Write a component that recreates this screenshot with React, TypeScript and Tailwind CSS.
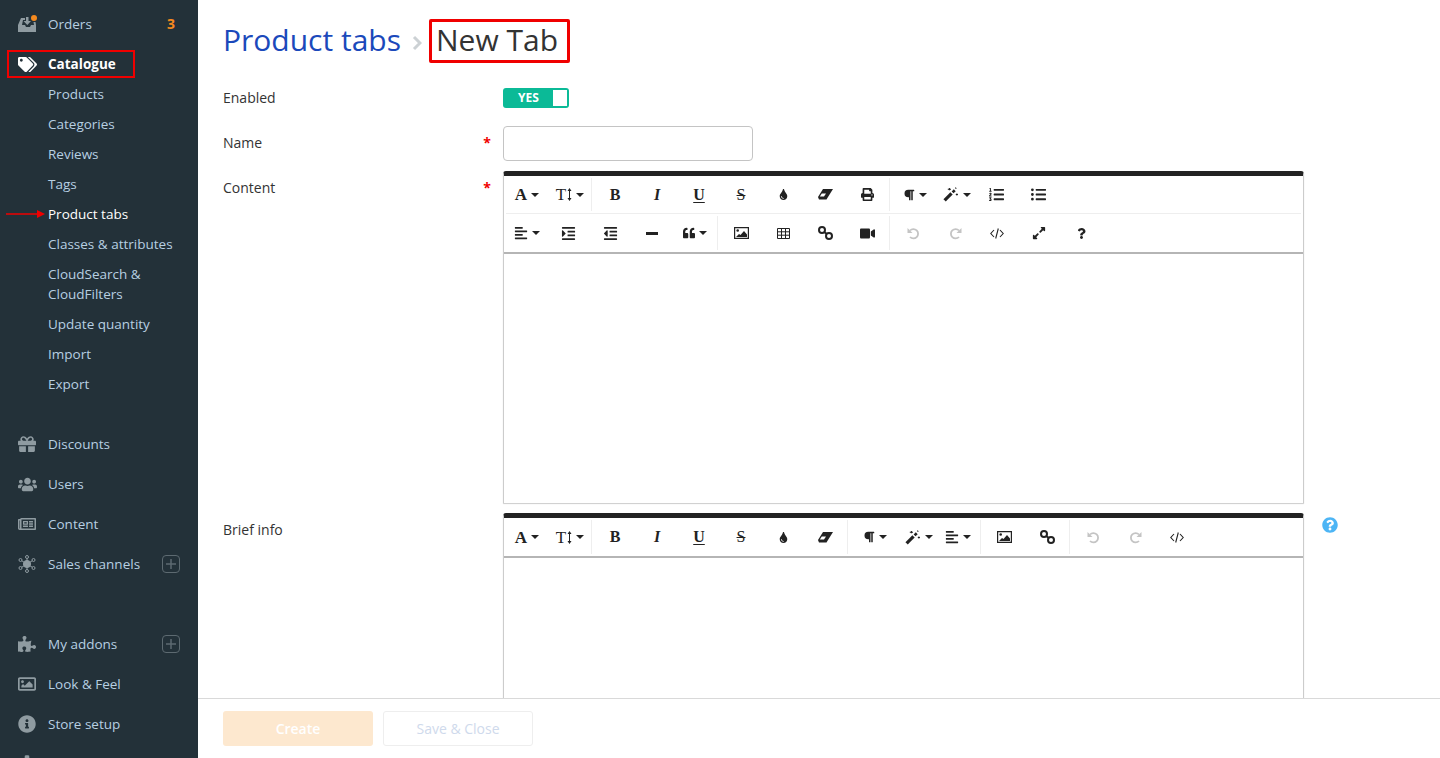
import type { ReactNode } from "react";
import {
  FaTags,
  FaGift,
  FaUsers,
  FaRegNewspaper,
  FaPuzzlePiece,
  FaRegImage,
  FaInfoCircle,
  FaCog,
  FaTint,
  FaPrint,
  FaParagraph,
  FaListOl,
  FaListUl,
  FaAlignLeft,
  FaIndent,
  FaOutdent,
  FaQuoteLeft,
  FaVideo,
  FaExpandAlt,
  FaQuestion,
  FaQuestionCircle,
} from "react-icons/fa";

function Caret() {
  return (
    <svg width="8" height="4" viewBox="0 0 8 4" className="ml-[4px] shrink-0">
      <path d="M0 0h8L4 4z" fill="#222" />
    </svg>
  );
}

function Eraser() {
  return (
    <svg width="15" height="11" viewBox="0 0 15 11">
      <path d="M5 0h10L10 8H0z" fill="#222" />
      <path d="M1.800 7.500L3.800 4.500H8L6 7.500z" fill="#fff" />
      <path d="M0 8h10l-1.500 2.500H1z" fill="#222" />
    </svg>
  );
}

function Wand() {
  return (
    <svg width="16" height="15" viewBox="0 0 15 14" fill="none" stroke="#222">
      <path d="M1.500 12.500L8 6" strokeWidth="3" />
      <path d="M9 5l2-2" strokeWidth="2.500" />
      <path d="M6 1v2M4.500 2h3M13 6v2M12 7h2M11.500 .500l1 1" strokeWidth="1" />
    </svg>
  );
}

function LinkIcon() {
  return (
    <svg width="15" height="14" viewBox="0 0 15 14" fill="none" stroke="#222" strokeWidth="2">
      <circle cx="4" cy="4" r="3" />
      <circle cx="11" cy="10" r="3" />
      <path d="M6 6l3 2" />
    </svg>
  );
}

function CodeIcon() {
  return (
    <svg width="14" height="11" viewBox="0 0 14 11" fill="none" stroke="#222" strokeWidth="1.100">
      <path d="M4 2L.800 5.500 4 9M10 2l3.200 3.500L10 9M8.300 .500L5.700 10.500" />
    </svg>
  );
}

function TableIcon() {
  return (
    <svg width="13" height="11" viewBox="0 0 13 11" fill="none" stroke="#222" strokeWidth="1">
      <path d="M.500 .500h12v10H.500zM.500 3.800h12M.500 7.200h12M4.500 .500v10M8.500 .500v10" />
    </svg>
  );
}

function PictureIcon() {
  return (
    <svg width="15" height="12" viewBox="0 0 15 12">
      <path d="M.600 .600h13.800v10.800H.600z" fill="none" stroke="#222" strokeWidth="1.200" />
      <circle cx="3.700" cy="3.500" r="1.300" fill="#222" />
      <path d="M2 10l3-3 1.500 1L10 4l3 3.500V10z" fill="#222" />
    </svg>
  );
}

function Undo({ flip }: { flip?: boolean }) {
  return (
    <svg width="13" height="13" viewBox="0 0 13 13" fill="none" className={flip ? "-scale-x-100" : ""}>
      <path d="M3 3.500A4.700 4.700 0 1 1 3 10" stroke="#c4c4c4" strokeWidth="1.800" />
      <path d="M.500 1v5h5z" fill="#c4c4c4" />
    </svg>
  );
}

function Serif({ children, className }: { children: ReactNode; className?: string }) {
  return (
    <span className={`font-['Liberation_Serif',serif] text-[16px] leading-none text-[#222] ${className ?? ""}`}>
      {children}
    </span>
  );
}

function Btn({ w = "w-[42px]", children }: { w?: string; children: ReactNode }) {
  return <div className={`${w} flex h-full shrink-0 items-center justify-center text-[13px] text-[#222]`}>{children}</div>;
}

function Sep() {
  return <div className="ml-[1px] mr-[2px] h-full w-px shrink-0 bg-[#eeeeee]" />;
}

function FontBtns() {
  return (
    <>
      <Btn>
        <Serif className="font-bold text-[17px]">A</Serif>
        <Caret />
      </Btn>
      <Btn>
        <Serif className="ml-[2px] text-[17px]">T</Serif>
        <svg width="5" height="13" viewBox="0 0 5 13" className="ml-[1px]">
          <path d="M2.500 0L4.500 3H3v7h1.500l-2 3-2-3H2V3H.500z" fill="#222" />
        </svg>
        <Caret />
      </Btn>
    </>
  );
}

function StyleBtns() {
  return (
    <>
      <Btn><Serif className="font-bold">B</Serif></Btn>
      <Btn><Serif className="italic font-bold">I</Serif></Btn>
      <Btn><Serif className="font-bold underline underline-offset-2">U</Serif></Btn>
      <Btn><Serif className="line-through">S</Serif></Btn>
      <Btn><FaTint size={11} /></Btn>
      <Btn><Eraser /></Btn>
    </>
  );
}

function Editor({ children, bodyClass }: { children: ReactNode; bodyClass: string }) {
  return (
    <div className="w-[801px] shrink-0 rounded-t-[3px] border-x border-[#cccccc] border-t-[5px] border-t-[#222222] shadow-[0_1px_1px_rgba(0,0,0,0.2)]">
      {children}
      <div className={`border-t-2 border-t-[#b5b5b5] bg-white ${bodyClass}`} />
    </div>
  );
}

function PlusBox() {
  return (
    <div className="ml-auto flex h-[18px] w-[18px] items-center justify-center rounded-[4px] border border-[#5d6a71]">
      <svg width="10" height="10" viewBox="0 0 10 10">
        <path d="M5 0v10M0 5h10" stroke="#5d6a71" strokeWidth="1.500" />
      </svg>
    </div>
  );
}

function NavItem({ icon, label, plus, badge }: { icon: ReactNode; label: string; plus?: boolean; badge?: string }) {
  return (
    <div className="flex h-10 shrink-0 items-center pl-[18px] pr-[18px]">
      <div className="flex w-[30px] justify-start text-[18px] text-[#8f9ba1]">{icon}</div>
      <span className="text-[#b7cfe2]">{label}</span>
      {plus && <PlusBox />}
      {badge && <span className="ml-auto mr-[5px] text-[14px] font-bold text-[#f58a1f]">{badge}</span>}
    </div>
  );
}

function SubItem({ label, active }: { label: string; active?: boolean }) {
  return (
    <div className={`flex h-[30px] shrink-0 items-center pl-[48px] ${active ? "text-white" : "text-[#b7cfe2]"}`}>{label}</div>
  );
}

function Sidebar() {
  return (
    <aside className="relative flex h-full w-[198px] shrink-0 flex-col overflow-hidden bg-[#233139] pt-[4px] text-[13.5px] leading-5">
      <NavItem
        label="Orders"
        badge="3"
        icon={
          <svg width="20" height="20" viewBox="0 0 20 20">
            <path d="M3 4h4v2H5L4 11h3l1 2h4l1-2h3l-.5-3h2l.5 3v7H0v-7z" fill="#8f9ba1" />
            <path d="M8 3h2.500v4H13l-3.700 4L5.500 7H8z" fill="#8f9ba1" />
            <circle cx="16" cy="4" r="3" fill="#f58a1f" />
          </svg>
        }
      />
      <div className="mt-[5px] flex h-[30px] shrink-0 items-center pl-[18px]">
        <div className="w-[30px]"><FaTags size={19} className="text-white" /></div>
        <span className="font-bold text-white">Catalogue</span>
      </div>
      <SubItem label="Products" />
      <SubItem label="Categories" />
      <SubItem label="Reviews" />
      <SubItem label="Tags" />
      <SubItem label="Product tabs" active />
      <SubItem label="Classes & attributes" />
      <div className="flex h-[50px] shrink-0 items-center pl-[48px] text-[#b7cfe2]">
        CloudSearch &<br />CloudFilters
      </div>
      <SubItem label="Update quantity" />
      <SubItem label="Import" />
      <SubItem label="Export" />
      <div className="h-[25px] shrink-0" />
      <NavItem label="Discounts" icon={<FaGift />} />
      <NavItem label="Users" icon={<FaUsers size={19} />} />
      <NavItem label="Content" icon={<FaRegNewspaper />} />
      <NavItem
        label="Sales channels"
        plus
        icon={
          <svg width="18" height="18" viewBox="0 0 18 18" fill="none" stroke="#8f9ba1" strokeWidth="1">
            <path d="M9 2v14M2.500 5l13 8M15.500 5l-13 8" />
            <circle cx="9" cy="9" r="3.600" fill="#8f9ba1" />
            <circle cx="9" cy="2" r="1.500" fill="#233139" />
            <circle cx="9" cy="16" r="1.500" fill="#233139" />
            <circle cx="2.500" cy="5" r="1.500" fill="#233139" />
            <circle cx="15.500" cy="5" r="1.500" fill="#233139" />
            <circle cx="2.500" cy="13" r="1.500" fill="#233139" />
            <circle cx="15.500" cy="13" r="1.500" fill="#233139" />
          </svg>
        }
      />
      <div className="h-10 shrink-0" />
      <NavItem label="My addons" plus icon={<FaPuzzlePiece />} />
      <NavItem label="Look & Feel" icon={<FaRegImage />} />
      <NavItem label="Store setup" icon={<FaInfoCircle />} />
      <NavItem label="" icon={<FaCog />} />

      {/* red marks drawn over the screenshot */}
      <div className="absolute left-[7px] top-[50px] h-[28px] w-[128px] border-2 border-[#f00000]" />
      <svg width="40" height="10" viewBox="0 0 40 10" className="absolute left-[6px] top-[209px]">
        <path d="M0 5h32" stroke="#f00000" strokeWidth="1.500" />
        <path d="M31 1l8 4-8 4z" fill="#f00000" />
      </svg>
    </aside>
  );
}

export default function App() {
  return (
    <div className="flex h-[758px] w-full overflow-hidden bg-white font-['Open_Sans',sans-serif] text-[14px] text-[#333333]">
      <Sidebar />
      <main className="flex h-full min-w-0 flex-1 flex-col">
        <div className="min-h-0 flex-1 overflow-hidden pl-[25px]">
          <div className="mt-[19px] flex h-[44px] items-center text-[30px] leading-none">
            <span className="pb-[2px] text-[#1b49bb]">Product tabs</span>
            <svg width="10" height="18" viewBox="0 0 10 18" className="ml-[11px] mr-[7px] mt-[4px]" fill="none" stroke="#ccd1d4" strokeWidth="3">
              <path d="M2 3l6 6-6 6" />
            </svg>
            <span className="flex h-[44px] items-center rounded-[2px] border-[3px] border-[#f00000] pb-[2px] pl-[4px] pr-[9px]">New Tab</span>
          </div>

          <div className="mt-[25px] flex h-5 items-center">
            <div className="-mt-[2px] w-[280px] shrink-0">Enabled</div>
            <div className="flex h-5 w-[66px] items-center rounded-[3px] bg-[#0bba97] pl-[15px] pr-[2px]">
              <span className="text-[12px] font-bold text-white">YES</span>
              <div className="ml-auto h-4 w-[14px] bg-white" />
            </div>
          </div>

          <div className="mt-[18px] flex">
            <div className="flex w-[280px] shrink-0 justify-between pr-[12px] pt-[7px] leading-5">
              <span>Name</span>
              <span className="font-bold text-[#f00000]">*</span>
            </div>
            <div className="h-[35px] w-[250px] rounded-[4px] border border-[#c4c4c4] bg-white" />
          </div>

          <div className="mt-[10px] flex">
            <div className="flex w-[280px] shrink-0 justify-between pr-[12px] pt-[7px] leading-5">
              <span>Content</span>
              <span className="font-bold text-[#f00000]">*</span>
            </div>
            <Editor bodyClass="h-[251px]">
              <div className="mx-[2px] flex h-[38px] items-stretch border-b border-[#eeeeee] py-[2px]">
                <FontBtns />
                <Sep />
                <StyleBtns />
                <Btn><FaPrint size={13} /></Btn>
                <Sep />
                <Btn w="w-[46px]"><FaParagraph size={12} /><Caret /></Btn>
                <Btn w="w-[37px]"><Wand /><Caret /></Btn>
                <Btn><FaListOl size={15} /></Btn>
                <Btn><FaListUl size={15} /></Btn>
              </div>
              <div className="mx-[2px] flex h-[38px] items-stretch py-[2px]">
                <Btn w="w-[41px]"><FaAlignLeft size={14} /><Caret /></Btn>
                <Btn><FaIndent size={15} /></Btn>
                <Btn><FaOutdent size={15} /></Btn>
                <Btn><div className="h-[3px] w-[12px] bg-[#222]" /></Btn>
                <Btn w="w-[43px]"><FaQuoteLeft size={12} /><Caret /></Btn>
                <Sep />
                <Btn><PictureIcon /></Btn>
                <Btn><TableIcon /></Btn>
                <Btn><LinkIcon /></Btn>
                <Btn><FaVideo size={15} /></Btn>
                <Sep />
                <Btn><Undo /></Btn>
                <Btn><Undo flip /></Btn>
                <Btn><CodeIcon /></Btn>
                <Btn><FaExpandAlt size={14} /></Btn>
                <Btn><FaQuestion size={11} /></Btn>
              </div>
            </Editor>
          </div>

          <div className="mt-[10px] flex">
            <div className="w-[280px] shrink-0 pt-[7px] leading-5">Brief info</div>
            <Editor bodyClass="h-[300px]">
              <div className="mx-[2px] flex h-[38px] items-stretch py-[2px]">
                <FontBtns />
                <Sep />
                <StyleBtns />
                <Sep />
                <Btn w="w-[50px]"><FaParagraph size={12} /><Caret /></Btn>
                <Btn w="w-[37px]"><Wand /><Caret /></Btn>
                <Btn><FaAlignLeft size={14} /><Caret /></Btn>
                <Sep />
                <Btn w="w-[43px]"><PictureIcon /></Btn>
                <Btn><LinkIcon /></Btn>
                <Sep />
                <Btn><Undo /></Btn>
                <Btn><Undo flip /></Btn>
                <Btn><CodeIcon /></Btn>
              </div>
            </Editor>
            <div className="ml-[18px] mt-[4px]"><FaQuestionCircle size={16} className="text-[#4db5f5]" /></div>
          </div>
        </div>

        <footer className="flex h-[60px] shrink-0 gap-[10px] border-t border-[#d9d9d9] bg-white pl-[25px] pt-[12px]">
          <div className="flex h-[35px] w-[150px] items-center justify-center rounded-[3px] bg-[#fde8cf] font-semibold text-white">Create</div>
          <div className="flex h-[35px] w-[150px] items-center justify-center rounded-[3px] border border-[#eeeeee] text-[#cfdaec]">Save & Close</div>
        </footer>
      </main>
    </div>
  );
}
